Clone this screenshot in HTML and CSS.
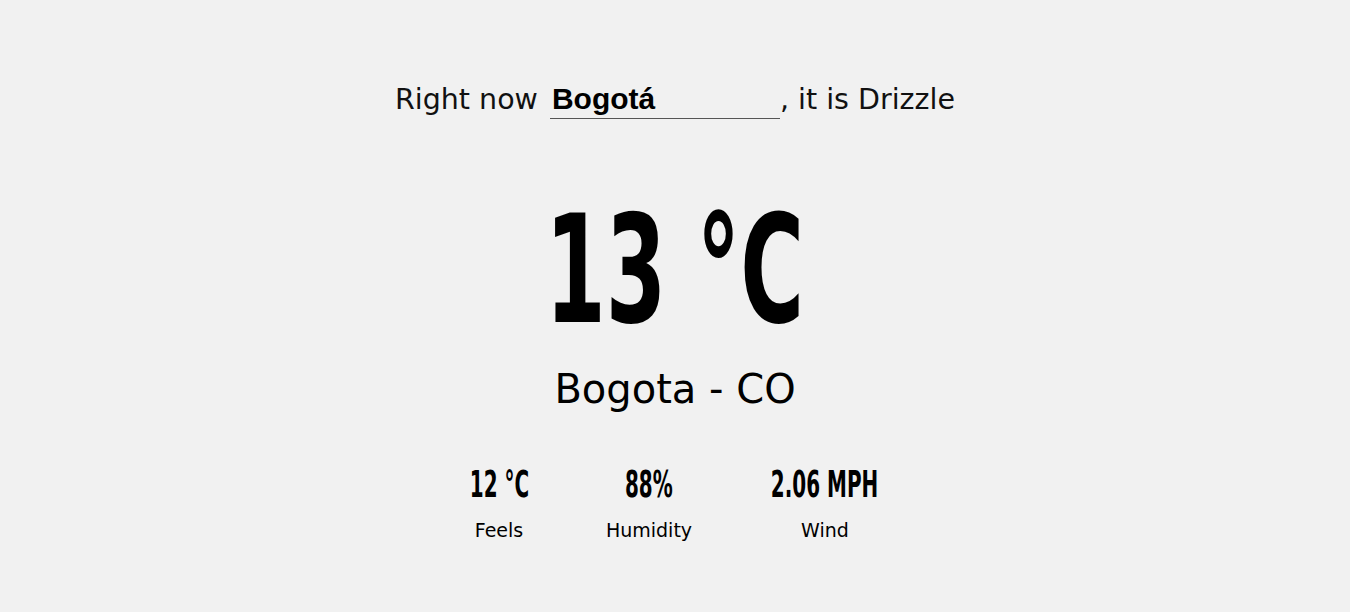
FILE: index.html
```html
<!DOCTYPE html>
<html lang="en">
<head>
<meta charset="utf-8">
<title>Weather</title>
<link rel="stylesheet" href="styles.css">
</head>
<body>
<main class="weather">
  <p class="sentence">
    <span class="lead">Right now</span>
    <input class="city-input" type="text" value="Bogotá">
    <span>, it is Drizzle</span>
  </p>
  <div class="temp"><span class="condensed">13 °C</span></div>
  <h1 class="place">Bogota - CO</h1>
  <ul class="stats">
    <li class="stat">
      <span class="stat-value"><span class="condensed">12 °C</span></span>
      <span class="stat-label">Feels</span>
    </li>
    <li class="stat">
      <span class="stat-value"><span class="condensed">88%</span></span>
      <span class="stat-label">Humidity</span>
    </li>
    <li class="stat">
      <span class="stat-value"><span class="condensed">2.06 MPH</span></span>
      <span class="stat-label">Wind</span>
    </li>
  </ul>
</main>
</body>
</html>
```
FILE: styles.css
```css
* { box-sizing: border-box; }
html, body {
  margin: 0;
  padding: 0;
  background: #f1f1f1;
  color: #000;
}
body {
  font-family: "DejaVu Sans", "Noto Sans", sans-serif;
}
.weather {
  display: flex;
  flex-direction: column;
  align-items: center;
  padding-top: 80px;
}
.sentence {
  margin: 0;
  font-size: 28.5px;
  line-height: 40px;
  display: flex;
  align-items: baseline;
  font-weight: 400;
  color: #111;
}
.lead { margin-right: 12px; }
.city-input {
  width: 230px;
  font-family: "Liberation Sans", Arial, sans-serif;
  font-weight: 700;
  font-size: 30px;
  color: #000;
  background: transparent;
  border: none;
  border-bottom: 1px solid #555;
  padding: 0 2px 2px;
  outline: none;
}
.temp {
  margin-top: 72px;
  font-family: "DejaVu Sans", sans-serif;
  font-stretch: condensed;
  font-weight: 700;
  font-size: 150px;
  line-height: 156px;
  display: flex;
  justify-content: center;
}
.temp .condensed { transform: scaleX(0.645); }
.condensed {
  display: inline-block;
  transform: scaleX(0.6);
  white-space: nowrap;
}
.place {
  margin: 16px 0 0;
  font-size: 40px;
  font-weight: 400;
  line-height: 50px;
}
.stats {
  list-style: none;
  margin: 50px 0 0;
  padding: 0;
  display: grid;
  grid-template-columns: 58px 90px 110px;
  column-gap: 76px;
  justify-content: center;
}
.stat {
  display: flex;
  flex-direction: column;
  align-items: center;
}
.stat-value {
  width: 100%;
  display: flex;
  justify-content: center;
  font-family: "DejaVu Sans", sans-serif;
  font-stretch: condensed;
  font-weight: 700;
  font-size: 37px;
  line-height: 42px;
}
.stat-label {
  margin-top: 12px;
  font-size: 19px;
  line-height: 24px;
  white-space: nowrap;
}
```
